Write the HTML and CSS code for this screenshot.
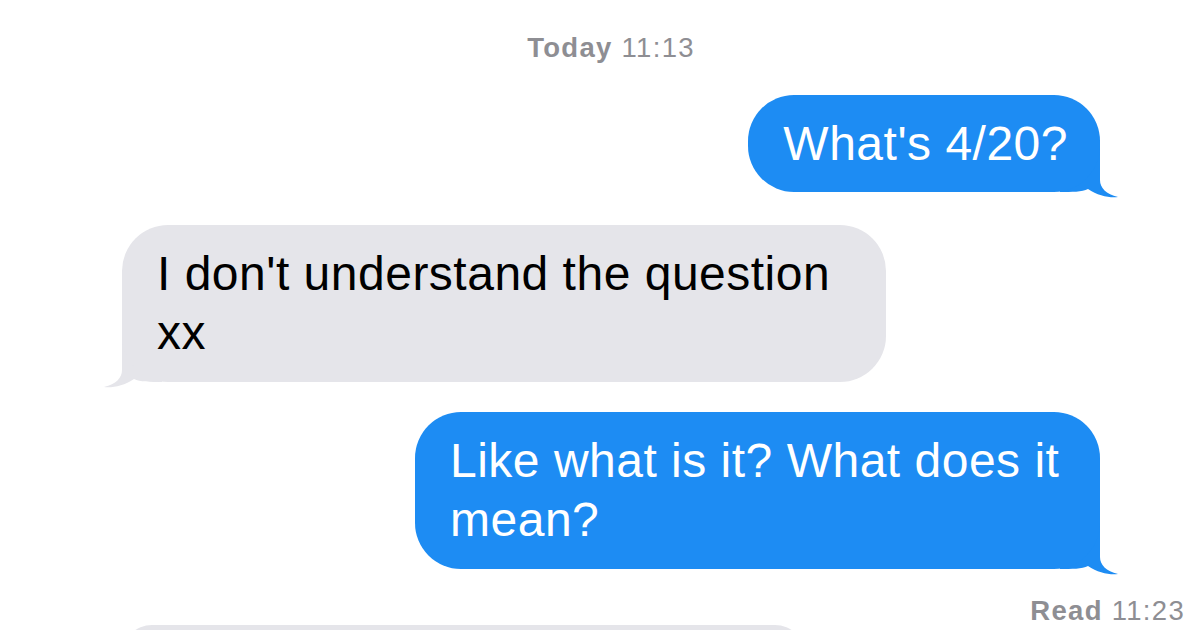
FILE: index.html
```html
<!DOCTYPE html>
<html lang="en">
<head>
<meta charset="UTF-8">
<title>Messages</title>
<link rel="stylesheet" href="styles.css">
</head>
<body>
<div class="thread">
	<p class="stamp"><b>Today</b> 11:13</p>

	<div class="bubble sent first">What's 4/20?
		<svg class="tail" width="60" height="60" viewBox="0 0 60 60"><path d="M0,0 H40 V40 C40,48 46,54 58,57 C50,58 38,56 28,49 C22,52 12,52 0,52 Z"/></svg>
	</div>

	<div class="bubble received">I don't understand the question xx
		<svg class="tail" width="60" height="60" viewBox="0 0 60 60"><path d="M60,0 H20 V40 C20,48 14,54 2,57 C10,58 22,56 32,49 C38,52 48,52 60,52 Z"/></svg>
	</div>

	<div class="bubble sent second">Like what is it? What does it mean?
		<svg class="tail" width="60" height="60" viewBox="0 0 60 60"><path d="M0,0 H40 V40 C40,48 46,54 58,57 C50,58 38,56 28,49 C22,52 12,52 0,52 Z"/></svg>
	</div>

	<p class="stamp read"><b>Read</b> 11:23</p>

	<div class="bubble received next"></div>
</div>
</body>
</html>
```

FILE: styles.css
```css
html, body, p, div { margin:0; padding:0; }
body { background:#fff; font:normal 48px "Liberation Sans", Arial, sans-serif; }

.thread { display:flex; flex-direction:column; height:630px; overflow:hidden; }

.stamp { margin-top:32px; padding-left:22px; font-size:27.5px; line-height:32px; letter-spacing:1.3px; color:#8e8e93; text-align:center; }
.stamp b { font-weight:bold; }
.stamp.read { margin-top:28px; padding:0 15px 0 0; line-height:28px; text-align:right; }

.bubble { position:relative; padding:19px 35px 20px; line-height:59px; letter-spacing:0.5px; border-radius:46px; }
.bubble .tail { position:absolute; bottom:-8px; z-index:-1; }

.sent { align-self:flex-end; margin-right:100px; color:#fff; background-color:#1d8cf3; }
.sent .tail { right:-20px; fill:#1d8cf3; }
.sent.first { margin-top:31px; padding:19px 32px 19px 35px; }
.sent.second { max-width:625px; margin-top:30px; padding-right:25px; }

.received { align-self:flex-start; max-width:694px; margin:33px 0 0 122px; color:#000; background-color:#e5e5ea; }
.received .tail { left:-20px; fill:#e5e5ea; }
.received.next { flex:none; width:683px; height:60px; margin-top:0; padding:0; }
```
